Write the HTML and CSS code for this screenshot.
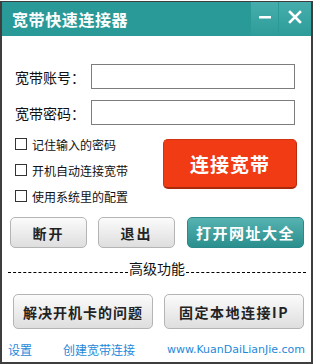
FILE: index.html
```html
<!DOCTYPE html>
<html lang="zh">
<head>
<meta charset="utf-8">
<link rel="stylesheet" href="styles.css">
</head>
<body>
<div class="window">
  <div class="titlebar">
    <div class="title">宽带快速连接器</div>
    <div class="tbtns">
      <div class="tbtn min"><svg width="14" height="14" viewBox="0 0 14 14"><rect x="1" y="6" width="12" height="2.5" fill="#fff"/></svg></div>
      <div class="tbtn close"><svg width="14" height="14" viewBox="0 0 14 14"><path d="M2 2 L12 12 M12 2 L2 12" stroke="#fff" stroke-width="2.6" stroke-linecap="square"/></svg></div>
    </div>
  </div>
  <div class="content">
    <div class="field"><span class="label">宽带账号：</span><input class="inp" type="text"></div>
    <div class="field f2"><span class="label">宽带密码：</span><input class="inp" type="password"></div>
    <div class="mid">
      <div class="checks">
        <label class="chk"><span class="box"></span>记住输入的密码</label>
        <label class="chk"><span class="box"></span>开机自动连接宽带</label>
        <label class="chk"><span class="box"></span>使用系统里的配置</label>
      </div>
      <div class="connect">连接宽带</div>
    </div>
    <div class="btnrow">
      <div class="gbtn b1">断开</div>
      <div class="gbtn b2">退出</div>
      <div class="tealbtn">打开网址大全</div>
    </div>
    <div class="divider"><span class="dline"></span><span class="dtext">高级功能</span><span class="dline"></span></div>
    <div class="btnrow2">
      <div class="gbtn big">解决开机卡的问题</div>
      <div class="gbtn big ip">固定本地连接IP</div>
    </div>
    <div class="links">
      <span class="link l1">设置</span>
      <span class="link l2">创建宽带连接</span>
      <span class="link url">www.KuanDaiLianJie.com</span>
    </div>
  </div>
</div>
</body>
</html>
```
FILE: styles.css
```css
* { box-sizing: border-box; }
html, body { margin: 0; padding: 0; background: #fff; }
body { width: 313px; height: 364px; overflow: hidden; font-family: "Noto Sans CJK SC", "Noto Sans", sans-serif; }
.window {
  margin-top: 1px;
  width: 313px;
  height: 363px;
  border: 2px solid #3e3e3e;
  border-top-width: 1px;
  display: flex;
  flex-direction: column;
}
.titlebar {
  height: 34px;
  flex: none;
  background: #2a9a99;
  display: flex;
  justify-content: space-between;
  align-items: stretch;
}
.title {
  color: #fff;
  font-size: 16px;
  font-weight: bold;
  line-height: 34px;
  padding-left: 10px;
  letter-spacing: 0.6px;
}
.tbtns { display: flex; gap: 1px; }
.tbtn {
  display: flex; align-items: center; justify-content: center;
  background: linear-gradient(#45aeac, #2e9c9a);
}
.tbtn.min { width: 27px; }
.tbtn.close { width: 32px; }
.tbtn svg { margin-top: -4px; }
.content { flex: 1; display: flex; flex-direction: column; }
.field { display: flex; align-items: center; margin-top: 28px; padding-left: 13px; height: 25px; flex: none; }
.field.f2 { margin-top: 11px; }
.label { width: 76px; font-size: 14px; color: #111; }
.inp { width: 204px; height: 25px; border: 1px solid #7d7d7d; background: #fff; margin: 0; padding: 0 3px; outline: none; }
.mid { display: flex; margin-top: 9px; padding-left: 13px; flex: none; }
.checks { display: flex; flex-direction: column; gap: 6px; width: 148px; }
.chk { display: flex; align-items: center; height: 20px; font-size: 12px; color: #111; }
.box { width: 12px; height: 12px; border: 1px solid #333; background: #fff; margin-right: 5px; }
.connect {
  width: 134px; height: 50px;
  margin-top: 5px;
  background: #f13b14;
  border: 1px solid #cf3310;
  border-right-color: #b72c0c;
  border-bottom: 2px solid #a9290b;
  border-radius: 5px;
  color: #fff; font-size: 19px; font-weight: bold;
  display: flex; align-items: center; justify-content: center;
  letter-spacing: 1px;
}
.btnrow { display: flex; margin-top: 11px; padding-left: 8px; height: 31px; flex: none; }
.gbtn {
  background: linear-gradient(#fbfbfb, #dedede);
  border: 1px solid #b4b4b4;
  border-radius: 5px;
  color: #222; font-size: 14px; font-weight: bold;
  display: flex; align-items: center; justify-content: center;
  letter-spacing: 2px;
}
.b1, .b2 { width: 77px; }
.b2 { margin-left: 11px; }
.tealbtn {
  width: 117px; margin-left: 12px;
  background: linear-gradient(#56b3b1, #2a8f8e);
  border: 1px solid #2b8a89;
  border-radius: 5px;
  color: #fff; font-size: 15px; font-weight: bold;
  display: flex; align-items: center; justify-content: center;
  letter-spacing: 1.5px;
}
.divider { display: flex; align-items: center; margin-top: 10px; padding: 0 5px 0 6px; height: 20px; flex: none; }
.dline { flex: 1; border-top: 1px dashed #000; margin-top: 9px; }
.dtext { font-size: 14px; color: #111; padding: 0 1px; }
.btnrow2 { display: flex; margin-top: 16px; padding-left: 11px; height: 35px; gap: 11px; flex: none; }
.gbtn.big { width: 140px; letter-spacing: 1px; }
.gbtn.ip { letter-spacing: 1.5px; }
.links { display: flex; align-items: center; height: 22px; margin-top: 9px; color: #1d89da; font-size: 12px; flex: none; }
.link.l1 { margin-left: 6px; }
.link.l2 { margin-left: 31px; }
.link.url { margin-left: auto; margin-right: 6px; font-family: "DejaVu Sans", sans-serif; font-size: 11px; }
```
